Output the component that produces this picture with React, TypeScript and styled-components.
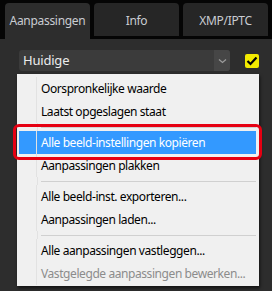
import React, { FC } from "react";
import styled, { createGlobalStyle } from "styled-components";

const GlobalStyle = createGlobalStyle`
  html, body {
    margin: 0;
    padding: 0;
    background: #050505;
  }
  body {
    font-family: "Noto Sans", "Open Sans", sans-serif;
  }
`;

type MenuEntry =
  | { kind: "item"; label: string; active?: boolean; disabled?: boolean }
  | { kind: "sep" };

const entries: MenuEntry[] = [
  { kind: "item", label: "Oorspronkelijke waarde" },
  { kind: "item", label: "Laatst opgeslagen staat" },
  { kind: "sep" },
  { kind: "item", label: "Alle beeld-instellingen kopiëren", active: true },
  { kind: "item", label: "Aanpassingen plakken" },
  { kind: "sep" },
  { kind: "item", label: "Alle beeld-inst. exporteren..." },
  { kind: "item", label: "Aanpassingen laden..." },
  { kind: "sep" },
  { kind: "item", label: "Alle aanpassingen vastleggen..." },
  { kind: "item", label: "Vastgelegde aanpassingen bewerken...", disabled: true },
];

const App: FC = () => {
  return (
    <>
      <GlobalStyle />
      <Screen>
        <TabBar>
          <Tab $active>Aanpassingen</Tab>
          <Tab>Info</Tab>
          <Tab>XMP/IPTC</Tab>
        </TabBar>
        <Panel>
          <Toolbar>
            <Select>
              <SelectValue>Huidige</SelectValue>
              <SelectArrow>
                <svg width="9" height="6" viewBox="0 0 9 6">
                  <path d="M1 1.5 L4.5 4.5 L8 1.5" fill="none" stroke="#9a9a9a" strokeWidth="1.3" />
                </svg>
              </SelectArrow>
            </Select>
            <CheckBox>
              <svg width="12" height="10" viewBox="0 0 12 10">
                <path d="M1.5 5 L4.5 8 L10.5 1.5" fill="none" stroke="#000" strokeWidth="2.2" />
              </svg>
            </CheckBox>
          </Toolbar>

          <Menu>
            {entries.map((e, i) =>
              e.kind === "sep" ? (
                <Separator key={i} />
              ) : (
                <MenuItem key={i} $active={e.active} $disabled={e.disabled}>
                  <Gutter />
                  <Label>{e.label}</Label>
                </MenuItem>
              )
            )}
          </Menu>
          <Callout />
        </Panel>
      </Screen>
    </>
  );
};

const Screen = styled.div`
  width: 272px;
  height: 291px;
  overflow: hidden;
  background: #050505;
  display: flex;
  flex-direction: column;
`;

const TabBar = styled.div`
  display: flex;
  gap: 4px;
  padding: 3px 3px 0 5px;
  height: 33px;
  border-bottom: 3px solid #050505;
  position: relative;
`;

const Tab = styled.div<{ $active?: boolean }>`
  width: 85px;
  box-sizing: border-box;
  border-radius: 4px 4px 0 0;
  background: ${(p) => (p.$active ? "#2d2d2d" : "#262626")};
  color: #c9ccd2;
  font-size: 12px;
  letter-spacing: -0.3px;
  display: flex;
  justify-content: center;
  align-items: center;
  padding-top: 1px;
  ${(p) => p.$active && "height: 36px; margin-bottom: -3px; z-index: 1; padding-bottom: 3px;"}
`;

const Panel = styled.div`
  flex: 1;
  position: relative;
  background: #2d2d2d;
  padding: 11px 13px 0 19px;
`;

const Toolbar = styled.div`
  display: flex;
  align-items: center;
  gap: 15px;
`;

const Select = styled.div`
  width: 211px;
  height: 21px;
  display: flex;
  border-radius: 3px;
  background: #3b3b3b;
  overflow: hidden;
`;

const SelectValue = styled.div`
  flex: 1;
  color: #ececec;
  font-size: 13px;
  letter-spacing: -0.2px;
  line-height: 21px;
  padding-left: 4px;
`;

const SelectArrow = styled.div`
  width: 16px;
  background: #464646;
  display: flex;
  align-items: center;
  justify-content: center;
`;

const CheckBox = styled.div`
  width: 14px;
  height: 14px;
  border-radius: 2px;
  background: #f2ea00;
  display: flex;
  align-items: center;
  justify-content: center;
`;

const Menu = styled.div`
  position: absolute;
  top: 35px;
  left: 17px;
  width: 242px;
  box-sizing: border-box;
  padding: 3px 3px 1px 2px;
  background: #f0f0f0;
  box-shadow: 1px 2px 3px rgba(0, 0, 0, 0.6);
  z-index: 2;
`;

const MenuItem = styled.div<{ $active?: boolean; $disabled?: boolean }>`
  height: 23px;
  display: flex;
  align-items: center;
  font-size: 12px;
  letter-spacing: -0.42px;
  background: ${(p) => (p.$active ? "#3399ff" : "transparent")};
  color: ${(p) => (p.$active ? "#ffffff" : p.$disabled ? "#8c8c8c" : "#000000")};
`;

const Gutter = styled.div`
  width: 18px;
  height: 100%;
  box-sizing: border-box;
  border-right: 1px solid #e2e2e2;
  margin-right: 4px;
`;

const Label = styled.span`
  white-space: nowrap;
`;

const Separator = styled.div`
  height: 8px;
  margin-left: 22px;
  display: flex;
  align-items: center;
  position: relative;
  &::before {
    content: "";
    flex: 1;
    height: 1px;
    background: #d0d0d0;
  }
  &::after {
    content: "";
    position: absolute;
    left: -4px;
    top: 0;
    bottom: 0;
    width: 1px;
    background: #e2e2e2;
  }
`;

const Callout = styled.div`
  position: absolute;
  top: 85px;
  left: 13px;
  width: 249px;
  height: 36px;
  box-sizing: border-box;
  border: 3px solid #e60012;
  border-radius: 6px;
  z-index: 3;
`;

export default App;
